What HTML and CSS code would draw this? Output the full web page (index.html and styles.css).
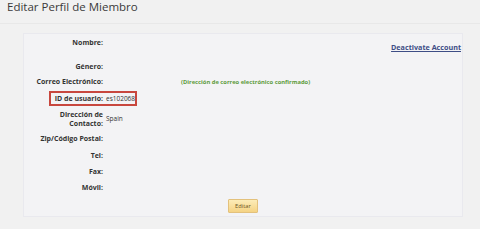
FILE: index.html
```html
<!DOCTYPE html>
<html lang="es">
<head>
    <meta charset="UTF-8">
    <meta name="viewport" content="width=device-width, initial-scale=1.0">
    <title>Editar Perfil de Miembro</title>
    <link rel="stylesheet" href="styles.css">
</head>
<body>
    <h1 class="page-title">Editar Perfil de Miembro</h1>

    <div class="panel">
        <a class="deactivate" href="#">Deactivate Account</a>

        <div class="row first">
            <span class="label">Nombre:</span>
            <span class="value"></span>
        </div>
        <div class="row gap-lg">
            <span class="label">Género:</span>
            <span class="value"></span>
        </div>
        <div class="row gap-sm">
            <span class="label">Correo Electrónico:</span>
            <span class="value"><span class="confirmed">(Dirección de correo electrónico confirmado)</span></span>
        </div>
        <div class="row highlight">
            <span class="label">ID de usuario:</span>
            <span class="value">es102068</span>
        </div>
        <div class="row">
            <span class="label two-line">Dirección de<br>Contacto:</span>
            <span class="value">Spain</span>
        </div>
        <div class="row">
            <span class="label">Zip/Código Postal:</span>
            <span class="value"></span>
        </div>
        <div class="row gap-md">
            <span class="label">Tel:</span>
            <span class="value"></span>
        </div>
        <div class="row">
            <span class="label">Fax:</span>
            <span class="value"></span>
        </div>
        <div class="row">
            <span class="label">Móvil:</span>
            <span class="value"></span>
        </div>

        <div class="actions">
            <button class="btn-edit">Editar</button>
        </div>
    </div>
</body>
</html>
```

FILE: styles.css
```css
body {
    margin: 0;
    background-color: #f1f1f1;
    font-family: "Open Sans", "DejaVu Sans", sans-serif;
    color: #333;
}
.page-title {
    margin: 0;
    height: 23px;
    padding-left: 7px;
    font-size: 11.5px;
    font-weight: normal;
    line-height: 13px;
    color: #3a3a3a;
    border-bottom: 1px solid #e8e8e8;
}
.panel {
    position: relative;
    margin: 9px 17px 0 23px;
    padding: 4px 0 3px 0;
    background-color: #f3f3f5;
    border: 1px solid #e9e9ee;
}
.deactivate {
    position: absolute;
    top: 8px;
    right: 1px;
    font-size: 7.2px;
    font-weight: bold;
    color: #3d4d85;
    text-decoration: underline;
}
.row {
    display: flex;
    align-items: center;
    margin-top: 6px;
    font-size: 7px;
    line-height: 10px;
}
.row.first {
    margin-top: 0;
}
.row.gap-lg {
    margin-top: 14px;
}
.row.gap-md {
    margin-top: 7px;
}
.row.gap-sm {
    margin-top: 5px;
}
.label {
    width: 79px;
    flex-shrink: 0;
    text-align: right;
    font-weight: bold;
    color: #333;
}
.label.two-line {
    line-height: 9px;
}
.value {
    padding-left: 3px;
    font-size: 6.5px;
    color: #333;
}
.confirmed {
    margin-left: 75px;
    font-size: 5.8px;
    font-weight: bold;
    color: #5d9b3c;
}
.row.highlight {
    position: relative;
    margin-top: 7px;
}
.row.highlight::after {
    content: "";
    position: absolute;
    left: 25px;
    top: -3px;
    width: 84px;
    height: 11px;
    border: 2px solid #c8473e;
}
.actions {
    display: flex;
    justify-content: center;
    margin-top: 6px;
}
.btn-edit {
    height: 14px;
    width: 30px;
    padding: 0;
    font-family: "Open Sans", "DejaVu Sans", sans-serif;
    font-size: 5.8px;
    color: #6b5424;
    background: linear-gradient(#fcecb8, #f5d384);
    border: 1px solid #e3c17c;
    border-radius: 1px;
}
```
